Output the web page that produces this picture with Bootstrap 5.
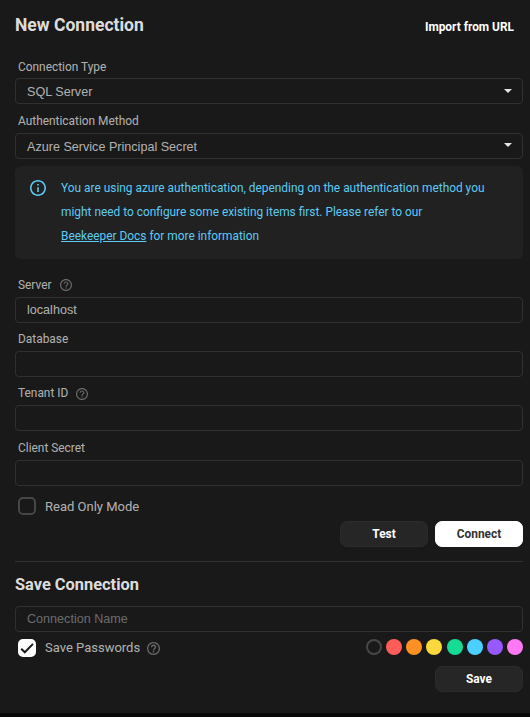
<!DOCTYPE html>
<html lang="en" data-bs-theme="dark">
<head>
<meta charset="utf-8">
<meta name="viewport" content="width=device-width, initial-scale=1">
<title>New Connection</title>
<link href="https://cdn.jsdelivr.net/npm/bootstrap@5.3.0/dist/css/bootstrap.min.css" rel="stylesheet">
<style>
html { background: #080808; }
body { background: #080808; color: rgba(255,255,255,.67); font-family: Roboto, sans-serif; font-size: 11.9px; line-height: 18px; }
.panel { height: 713px; background: #191919; padding: 0 7px 0 15px; overflow: hidden; }
.panel-head { height: 50px; }
.title { font-size: 17.5px; line-height: 24px; font-weight: 700; color: rgba(255,255,255,.87); margin: 13px 0 0; }
.import-link { color: #fff; font-weight: 700; font-size: 11.9px; margin: 18px 9px 0 0; line-height: 18px; }
.field-label { height: 28px; padding: 0 0 3px 3px; margin: 0; line-height: 18px; }
.field-label.first { padding-bottom: 2px; }
.field-label.tall { height: 29px; }
.form-control, .form-select { height: 26px; padding: 0 11px; border: 1px solid #303030; border-radius: 4px; background-color: transparent; color: rgba(255,255,255,.67); font: 12.6px/24px "Liberation Sans", sans-serif; }
.form-control::placeholder { color: rgba(255,255,255,.37); }
.form-select { padding-top: 1px; background-image: url("data:image/svg+xml,%3Csvg xmlns='http://www.w3.org/2000/svg' viewBox='0 0 8 4'%3E%3Cpath d='M0 0h8L4 4z' fill='%23e4e4e4'/%3E%3C/svg%3E"); background-size: 8px 4px; background-position: right 10px top 10px; }
.form-select.second { background-position: right 10px top 9px; }
.notice { height: 93px; margin: 7px 0 10px; padding: 10px 15px; border-radius: 6px; background: #212121; color: #5dcaf2; line-height: 24px; }
.notice svg { margin-top: 4px; margin-right: 15px; }
.notice a { color: inherit; text-underline-offset: 1px; }
.hint { color: #6b6b6b; }
.field-label .hint { margin-bottom: 3px; }
.field-label .hint.low { margin-bottom: 2px; }
.check-row { font-size: 13px; line-height: 18px; padding-left: 3px; }
.read-only { margin: 11px 0 0; height: 18px; }
.read-only span { padding-top: 1px; }
.form-check-input[type=checkbox] { width: 18px; height: 18px; margin: 0 9px 0 0; border: 2px solid #474747; border-radius: 5px; background-color: transparent; flex: none; }
.form-check-input[type=checkbox]:checked { background-color: #fff; border-color: #fff; background-size: 18px 18px; background-position: center; background-image: url("data:image/svg+xml,%3Csvg xmlns='http://www.w3.org/2000/svg' viewBox='0 0 18 18'%3E%3Cpath d='M3.2 9.7l3.6 3.6L15 4.9' fill='none' stroke='%23191919' stroke-width='2'/%3E%3C/svg%3E"); }
.actions { margin-top: 6px; gap: 7px; }
.btn { width: 88px; height: 26px; padding: 0; border-radius: 7px; font-size: 11.9px; font-weight: 700; line-height: 24px; }
.btn-flat { background: #262626; border-color: #2b2b2b; color: #fff; }
.btn-main { background: #fff; border-color: #fff; color: #333; }
.divider { height: 1px; background: #333; margin-top: 14px; }
.subtitle { font-size: 16.4px; line-height: 22px; font-weight: 700; color: rgba(255,255,255,.87); margin: 12px 0 10px; }
.save-options { margin: 7px 0 9px; height: 18px; }
.save-options .hint { margin-left: 7px; }
.swatches { width: 157px; }
.dot { width: 16px; height: 16px; border-radius: 50%; }
.dot-none { border: 2px solid #474747; }
.red { background: #ff5d59; } .orange { background: #ff9022; } .yellow { background: #fbd83b; } .green { background: #15db95; }
.blue { background: #4ad0ff; } .purple { background: #9758ff; } .pink { background: #ff78f4; }
</style>
<script src="https://cdn.jsdelivr.net/npm/bootstrap@5.3.0/dist/js/bootstrap.bundle.min.js"></script>
</head>
<body>
<svg class="d-none"><symbol id="help" viewBox="2 2 20 20"><path fill="currentColor" d="M11 18h2v-2h-2v2zm1-16C6.480 2 2 6.480 2 12s4.480 10 10 10 10-4.480 10-10S17.520 2 12 2zm0 18c-4.410 0-8-3.590-8-8s3.590-8 8-8 8 3.590 8 8-3.590 8-8 8zm0-14c-2.210 0-4 1.790-4 4h2c0-1.100.9-2 2-2s2 .9 2 2c0 2-3 1.750-3 5h2c0-2.250 3-2.500 3-5 0-2.210-1.790-4-4-4z"/></symbol></svg>
<main class="panel">
  <header class="panel-head d-flex justify-content-between align-items-start">
    <h1 class="title">New Connection</h1>
    <a href="#" class="import-link text-decoration-none">Import from URL</a>
  </header>
  <form>
    <label class="field-label first d-flex align-items-end" for="type">Connection Type</label>
    <select class="form-select" id="type"><option>SQL Server</option></select>
    <label class="field-label tall d-flex align-items-end" for="auth">Authentication Method</label>
    <select class="form-select second" id="auth"><option>Azure Service Principal Secret</option></select>
    <div class="notice d-flex align-items-start">
      <svg class="flex-shrink-0" width="16" height="16" viewBox="2 2 20 20" fill="currentColor"><path d="M11 7h2v2h-2zm0 4h2v6h-2zm1-9C6.480 2 2 6.480 2 12s4.480 10 10 10 10-4.480 10-10S17.520 2 12 2zm0 18c-4.410 0-8-3.590-8-8s3.590-8 8-8 8 3.590 8 8-3.590 8-8 8z"/></svg>
      <div>You are using azure authentication, depending on the authentication method you<br>might need to configure some existing items first. Please refer to our<br><a href="#">Beekeeper Docs</a> for more information</div>
    </div>
    <label class="field-label d-flex align-items-end" for="server">Server <svg class="hint ms-2" width="12" height="12"><use href="#help"/></svg></label>
    <input class="form-control" id="server" value="localhost">
    <label class="field-label d-flex align-items-end" for="db">Database</label>
    <input class="form-control" id="db">
    <label class="field-label d-flex align-items-end" for="tenant">Tenant ID <svg class="hint low ms-2" width="12" height="12"><use href="#help"/></svg></label>
    <input class="form-control" id="tenant">
    <label class="field-label tall d-flex align-items-end" for="secret">Client Secret</label>
    <input class="form-control" id="secret">
    <label class="check-row read-only d-flex align-items-center"><input class="form-check-input" type="checkbox"><span>Read Only Mode</span></label>
    <div class="actions d-flex justify-content-end"><button type="button" class="btn btn-flat">Test</button><button type="button" class="btn btn-main">Connect</button></div>
    <div class="divider"></div>
    <h2 class="subtitle">Save Connection</h2>
    <input class="form-control" placeholder="Connection Name">
    <div class="save-options d-flex justify-content-between">
      <label class="check-row d-flex align-items-center"><input class="form-check-input" type="checkbox" checked>Save Passwords <svg class="hint" width="13" height="13"><use href="#help"/></svg></label>
      <div class="swatches d-flex justify-content-between"><span class="dot dot-none"></span><span class="dot red"></span><span class="dot orange"></span><span class="dot yellow"></span><span class="dot green"></span><span class="dot blue"></span><span class="dot purple"></span><span class="dot pink"></span></div>
    </div>
    <div class="d-flex justify-content-end"><button type="button" class="btn btn-flat">Save</button></div>
  </form>
</main>
</body>
</html>
